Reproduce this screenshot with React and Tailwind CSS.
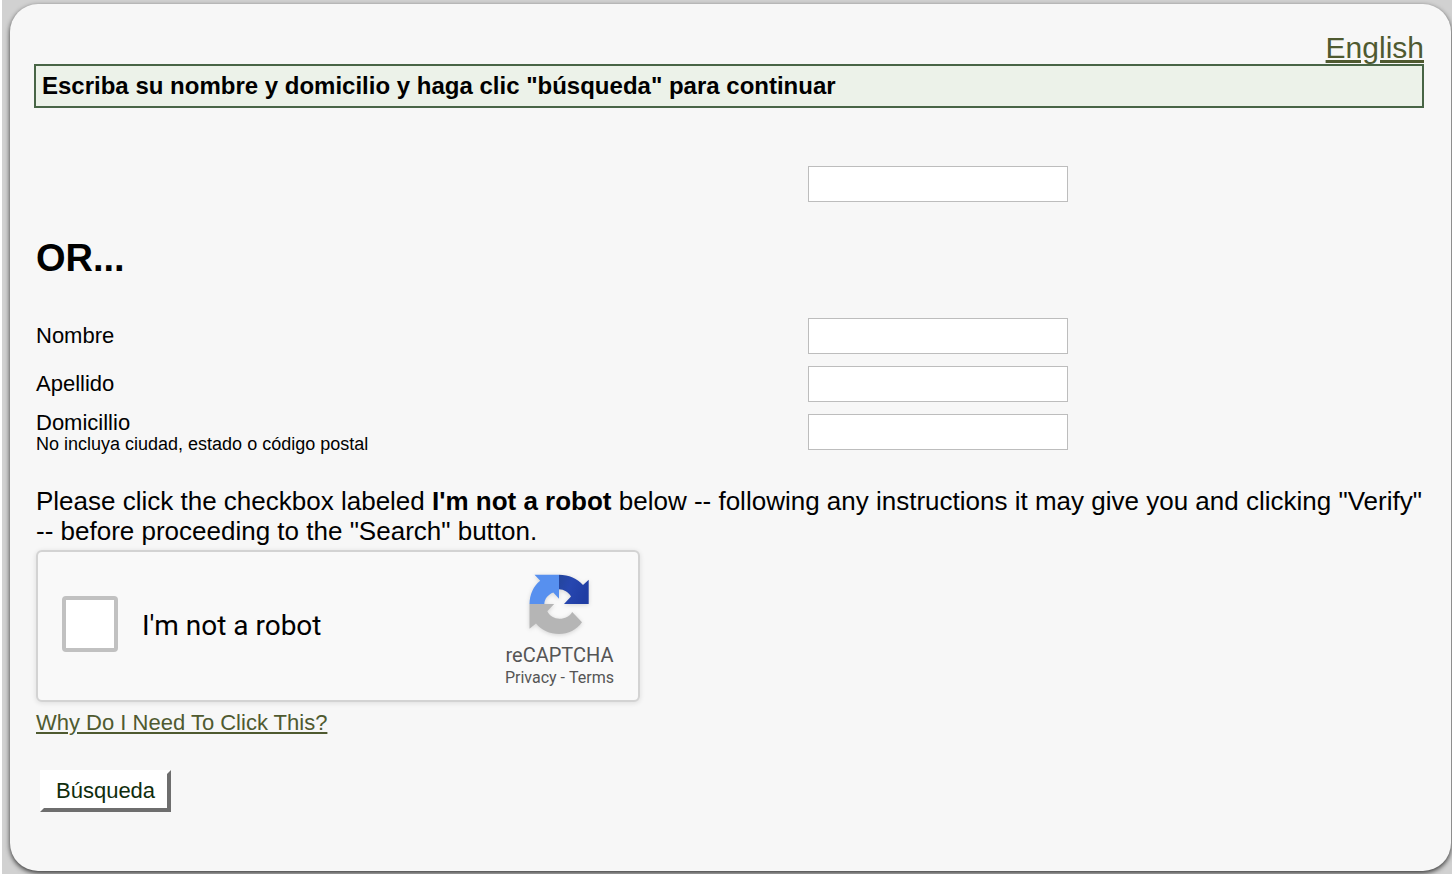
function Field({ id, label, note, ariaLabel }) {
  return (
    <div className="grid min-h-12 grid-cols-[5fr_4fr] items-center">
      <div>
        {label && (
          <label htmlFor={id} className="block text-[22px] leading-6">
            {label}
          </label>
        )}
        {note && (
          <p id={`${id}-note`} className="text-[18px] leading-[18px]">
            {note}
          </p>
        )}
      </div>
      <div className="flex pl-px">
        <input
          id={id}
          name={id}
          type="text"
          aria-label={ariaLabel}
          aria-describedby={note ? `${id}-note` : undefined}
          className="h-9 w-[260px] border border-[#bdbdbd] bg-white px-2 text-[22px]"
        />
      </div>
    </div>
  );
}

function RecaptchaLogo() {
  return (
    <svg viewBox="0 0 60 60" className="size-[60px] drop-shadow-sm" aria-hidden="true">
      <defs>
        <linearGradient id="dark" x1="0" y1="0" x2="1" y2="0.4">
          <stop offset="0" stopColor="#24459b" />
          <stop offset="0.45" stopColor="#2747b0" />
          <stop offset="1" stopColor="#203da3" />
        </linearGradient>
      </defs>
      <path
        d="M5.5 .7H30V24.7L24.3 18.5C19 20.5 15.6 24.8 15.3 30H.5C.7 20.5 4.5 12 11.2 6.8Z"
        fill="#5790ef"
      />
      <path
        d="M30 .7C39.8 .7 48.5 4.5 54 11L59.7 5.8V30H35L42 22.4C39.3 18 35 15.5 30 15.3Z"
        fill="url(#dark)"
      />
      <path
        d="M.5 30H25.2L18.3 37.3C20.8 42 25.3 44.8 30.5 44.8C36 44.8 40.8 42.4 43.2 38L53 48.2C47.5 55.8 39.5 60 30 60C20.8 60 12.5 56.3 7 49.5L.5 54.8Z"
        fill="#b5b5b5"
      />
    </svg>
  );
}

export default function App() {
  return (
    <div className="min-h-screen border-l-2 border-white bg-[#d1d1d1] pt-1 pr-px pb-[3px] pl-2 font-['Liberation_Sans',Arial,sans-serif] text-black">
      <main className="rounded-[28px] bg-[#f7f7f7] pt-[27px] pr-[27px] pb-[59px] pl-6 shadow-[0_2px_5px_0_rgba(0,0,0,0.75)]">
        <div className="flex justify-end">
          <a href="#english" className="text-[30px] leading-[33px] text-[#4f5a30] underline">
            English
          </a>
        </div>
        <h1 className="border-2 border-[#486546] bg-[#ecf2e9] px-1.5 text-2xl leading-10 font-bold">
          Escriba su nombre y domicilio y haga clic "búsqueda" para continuar
        </h1>

        <form className="mt-[52px] pl-0.5" onSubmit={(e) => e.preventDefault()}>
          <Field id="codigo" ariaLabel="Código" />
          <h2 className="pt-[26px] pb-[30px] text-[38px] leading-[48px] font-bold">OR...</h2>
          <Field id="nombre" label="Nombre" />
          <Field id="apellido" label="Apellido" />
          <Field
            id="domicilio"
            label="Domicillio"
            note="No incluya ciudad, estado o código postal"
          />

          <p className="mt-[30px] text-[26px] leading-[30px]">
            Please click the checkbox labeled <b>I'm not a robot</b> below -- following any
            instructions it may give you and clicking "Verify" -- before proceeding to the "Search"
            button.
          </p>

          <div className="mt-1 flex w-full max-w-[604px] items-center justify-between rounded-md border-2 border-[#d3d3d3] bg-[#f9f9f9] px-6 font-[Roboto,sans-serif] shadow-[0_1px_4px_1px_rgba(0,0,0,0.08)]">
            <div className="flex items-center gap-6 pb-1">
              <input
                id="robot"
                type="checkbox"
                className="size-14 appearance-none rounded-sm border-4 border-[#c1c1c1] bg-white checked:bg-[#5790ef]"
              />
              <label htmlFor="robot" className="pt-1 text-[28px] leading-8">
                I'm not a robot
              </label>
            </div>
            <div className="flex flex-col items-center pt-[22px] pb-[10px] text-[#555]">
              <RecaptchaLogo />
              <span className="mt-[10px] text-xl leading-[22px]">reCAPTCHA</span>
              <div className="flex gap-1 text-base leading-6">
                <a href="#privacy">Privacy</a>
                <span aria-hidden="true">-</span>
                <a href="#terms">Terms</a>
              </div>
            </div>
          </div>

          <a
            href="#why"
            className="mt-[9px] inline-block text-[22px] leading-6 text-[#4f5a30] underline"
          >
            Why Do I Need To Click This?
          </a>

          <div className="mt-[33px] pl-1">
            <button
              type="submit"
              className="border-4 border-t-white border-r-[#6e6e6e] border-b-[#6e6e6e] border-l-white bg-white px-3 text-[22px] leading-[34px] text-[#0f2d0c]"
            >
              Búsqueda
            </button>
          </div>
        </form>
      </main>
    </div>
  );
}
